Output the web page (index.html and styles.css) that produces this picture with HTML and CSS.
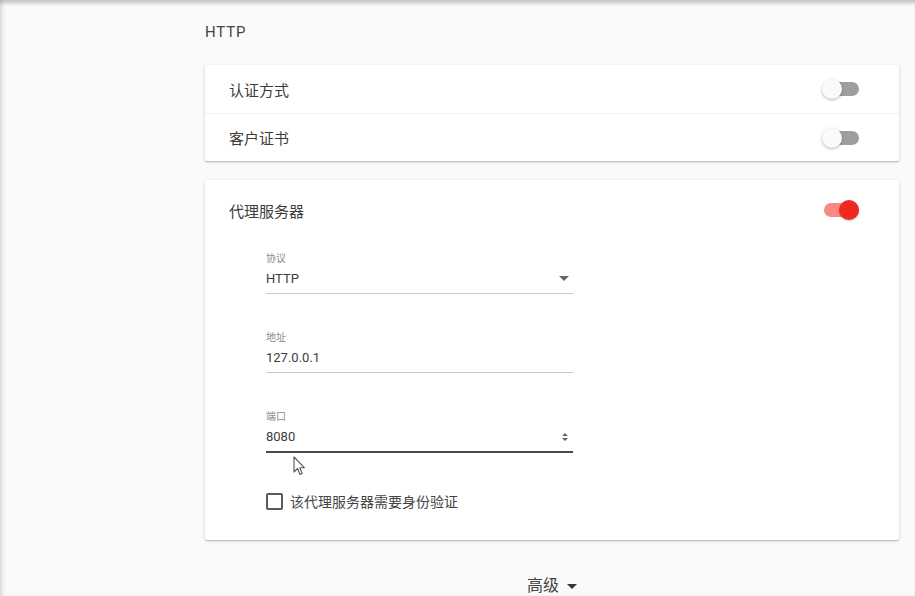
FILE: index.html
```html
<!DOCTYPE html>
<html lang="zh">
<head>
<meta charset="utf-8">
<link rel="stylesheet" href="styles.css">
</head>
<body>
<div class="page">
  <main class="content">
    <h2 class="section-title">HTTP</h2>
    <section class="card">
      <div class="row">
        <span class="row-label">认证方式</span>
        <span class="toggle"><span class="track"></span><span class="thumb"></span></span>
      </div>
      <div class="row">
        <span class="row-label">客户证书</span>
        <span class="toggle"><span class="track"></span><span class="thumb"></span></span>
      </div>
    </section>
    <section class="card proxy">
      <div class="proxy-head">
        <span class="row-label">代理服务器</span>
        <span class="toggle on"><span class="track"></span><span class="thumb"></span></span>
      </div>
      <div class="fields">
        <div class="field">
          <div class="field-label">协议</div>
          <div class="field-value"><span>HTTP</span><span class="caret"></span></div>
        </div>
        <div class="field">
          <div class="field-label">地址</div>
          <div class="field-value"><span>127.0.0.1</span></div>
        </div>
        <div class="field focused">
          <div class="field-label">端口</div>
          <div class="field-value"><span>8080</span>
            <svg class="spin" width="8" height="10" viewBox="0 0 8 10"><path d="M4 1 L7 4 H1 Z M4 9 L1 6 H7 Z" fill="#666"/></svg>
          </div>
          <svg class="cursor" width="14" height="20" viewBox="0 0 14 20"><path d="M1 1 V16 L4.5 12.5 L7 18.5 L9.2 17.5 L6.8 11.8 H11.5 Z" fill="#fff" stroke="#555" stroke-width="1.1" stroke-linejoin="round"/></svg>
        </div>
        <label class="check">
          <span class="box"></span>
          <span class="check-label">该代理服务器需要身份验证</span>
        </label>
      </div>
    </section>
    <div class="advanced">高级 <span class="caret dark"></span></div>
  </main>
</div>
</body>
</html>
```
FILE: styles.css
```css
* { box-sizing: border-box; }
html, body { margin: 0; padding: 0; }
body {
  background: #fafafa;
  font-family: Roboto, "Noto Sans CJK SC", sans-serif;
  color: #3a3a3a;
  width: 915px;
  height: 596px;
  overflow: hidden;
}
.page {
  height: 596px;
  box-shadow: inset 0 5px 4px -2px rgba(0,0,0,0.22), inset 5px 0 5px -3px rgba(0,0,0,0.12);
}
.content {
  margin-left: 205px;
  width: 694px;
  padding-top: 22px;
}
.section-title {
  margin: 0 0 23px 0;
  font-size: 15px;
  font-weight: 400;
  line-height: 20px;
  letter-spacing: 0.8px;
  color: #444;
}
.card {
  background: #fff;
  border-radius: 2px;
  box-shadow: 0 1px 3px rgba(0,0,0,0.22), 0 1px 1px rgba(0,0,0,0.1);
  margin-bottom: 19px;
}
.row {
  height: 48px;
  display: flex;
  align-items: center;
  justify-content: space-between;
  padding: 0 40px 0 24px;
}
.row + .row { border-top: 1px solid #f1f1f1; }
.row-label { font-size: 15px; color: #3c3c3c; }
.toggle {
  position: relative;
  width: 37px;
  height: 20px;
  display: inline-block;
}
.track {
  position: absolute;
  left: 2px; right: 0; top: 3px;
  height: 14px;
  border-radius: 7px;
  background: #9e9e9e;
}
.thumb {
  position: absolute;
  left: 0; top: 0;
  width: 20px; height: 20px;
  border-radius: 50%;
  background: #fafafa;
  box-shadow: 0 1px 3px rgba(0,0,0,0.3);
}
.toggle.on .track { background: #f88a80; }
.toggle.on .thumb { left: 17px; background: #f0291f; box-shadow: 0 1px 2px rgba(0,0,0,0.25); }
.proxy { padding-bottom: 29px; }
.proxy-head {
  display: flex;
  align-items: center;
  justify-content: space-between;
  padding: 18px 40px 0 24px;
  height: 42px;
}
.fields { padding: 30px 0 0 61px; }
.field { width: 307px; position: relative; margin-bottom: 37px; }
.field-label { font-size: 10px; line-height: 14px; color: #8a8a8a; }
.field-value {
  display: flex;
  align-items: center;
  justify-content: space-between;
  font-size: 13px;
  line-height: 20px;
  height: 28px;
  padding: 3px 0 5px;
  color: #3c3c3c;
  border-bottom: 1px solid #c8c8c8;
}
.field.focused .field-value { border-bottom: 2px solid #4a4a4a; height: 29px; }
.caret {
  width: 0; height: 0;
  border-left: 5px solid transparent;
  border-right: 5px solid transparent;
  border-top: 5px solid #666;
  margin-right: 4px;
}
.spin { margin-right: 4px; }
.cursor { position: absolute; left: 27px; top: 46px; }
.field.focused { margin-bottom: 38px; }
.check { display: flex; align-items: center; gap: 7px; }
.box {
  width: 17px; height: 17px;
  border: 2px solid #5a5a5a;
  border-radius: 2px;
}
.check-label { font-size: 14px; color: #444; }
.advanced {
  text-align: center;
  font-size: 16px;
  line-height: 18px;
  color: #444;
  margin-top: 37px;
  display: flex;
  justify-content: center;
  align-items: center;
  gap: 6px;
}
.caret.dark { border-top-color: #333; margin: 0 0 0 2px; }
```
